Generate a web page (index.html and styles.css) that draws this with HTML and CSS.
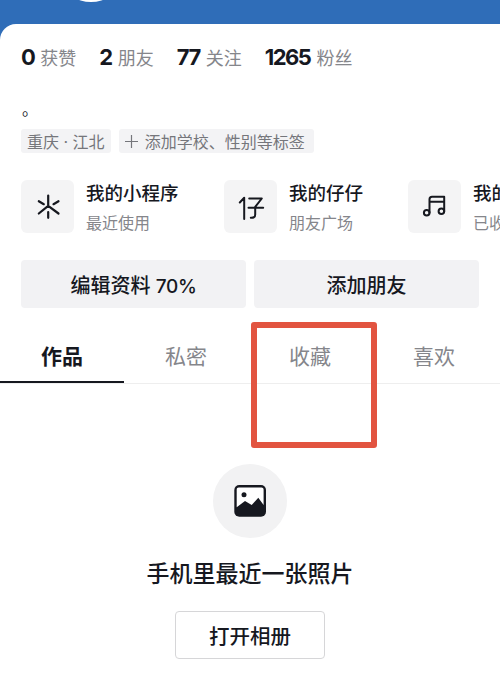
FILE: index.html
```html
<!DOCTYPE html>
<html lang="zh-CN">

<head>
  <meta charset="UTF-8" />
  <title>个人主页</title>
  <meta name="viewport" content="width=device-width, initial-scale=1.0" />
  <link rel="stylesheet" href="styles.css">
</head>

<body>
  <div class="cover">
    <div class="avatar"></div>
  </div>

  <div class="profile">
    <div class="stats">
      <div class="stat"><b>0</b><span>获赞</span></div>
      <div class="stat"><b>2</b><span>朋友</span></div>
      <div class="stat"><b>77</b><span>关注</span></div>
      <div class="stat"><b>1265</b><span>粉丝</span></div>
    </div>

    <p class="bio">。</p>

    <div class="tags">
      <span class="tag">重庆 · 江北</span>
      <span class="tag tag-add">
        <svg class="plus" width="13" height="13" viewBox="0 0 13 13" stroke="#75767b" stroke-width="1.2">
          <path d="M6.500 0v13M0 6.500h13" />
        </svg>
        添加学校、性别等标签
      </span>
    </div>

    <div class="shortcuts">
      <div class="shortcut">
        <div class="tile">
          <svg width="28" height="28" viewBox="0 0 28 28" fill="none" stroke="#16181f" stroke-width="2.200" stroke-linecap="round" stroke-linejoin="round">
            <path d="M14.200 2.500v10.300M4.800 20.500l9.400-7.700 10.300 7.700M14.200 19v5.800M4.800 8.200l5 3M24.500 8.200l-5 3" />
          </svg>
        </div>
        <div>
          <h4>我的小程序</h4>
          <p>最近使用</p>
        </div>
      </div>
      <div class="shortcut">
        <div class="tile">
          <svg width="28" height="28" viewBox="0 0 28 28" fill="none" stroke="#16181f" stroke-width="2" stroke-linecap="round" stroke-linejoin="round">
            <path d="M2.800 9.500l4.400-4.700V26M12.200 5.500h12.600l-6.600 8.300v7.700c0 2.500-1.500 3.500-4.400 3.300M11.500 14.800h14.700" />
          </svg>
        </div>
        <div>
          <h4>我的仔仔</h4>
          <p>朋友广场</p>
        </div>
      </div>
      <div class="shortcut">
        <div class="tile">
          <svg width="28" height="28" viewBox="0 0 28 28" fill="none" stroke="#16181f" stroke-width="2" stroke-linecap="round" stroke-linejoin="round">
            <path d="M8.500 19.800V6.300c0-1.500 1-2.500 2.500-2.500h12.200v14.400M8.500 8.800h14.700" />
            <circle cx="5.700" cy="19.800" r="2.800" />
            <circle cx="20.400" cy="18.200" r="2.800" />
          </svg>
        </div>
        <div>
          <h4>我的音乐</h4>
          <p>已收藏</p>
        </div>
      </div>
    </div>

    <div class="actions">
      <button class="btn">编辑资料 <span class="pct">70%</span></button>
      <button class="btn">添加朋友</button>
    </div>

    <div class="tabs">
      <a class="active">作品</a>
      <a>私密</a>
      <a>收藏</a>
      <a>喜欢</a>
    </div>

    <div class="empty">
      <div class="circle">
        <svg width="34" height="34" viewBox="0 0 34 34">
          <rect x="1.300" y="1" width="31.700" height="31.700" rx="5" fill="#16181f" />
          <path d="M3.700 23.300V5.500c0-1.200.8-2 2-2h22.800c1.200 0 2.100.8 2.100 2V21l-5.300-7.300-6.600 7.300-6.700-4z" fill="#fff" />
          <circle cx="11" cy="10.700" r="2.500" fill="#16181f" />
        </svg>
      </div>
      <h3>手机里最近一张照片</h3>
      <button class="open-btn">打开相册</button>
    </div>
  </div>

  <div class="highlight"></div>
</body>

</html>
```

FILE: styles.css
```css
body {
  margin: 0;
  height: 697px;
  overflow: hidden;
  position: relative;
  background: #2f6db8;
  font-family: "Inter", "Noto Sans CJK SC", sans-serif;
  color: #16181f;
}

.cover {
  height: 24px;
  position: relative;
  overflow: hidden;
}

.avatar {
  position: absolute;
  left: 64px;
  top: -38px;
  width: 54px;
  height: 40px;
  border-radius: 50%;
  background: #fff;
}

.profile {
  background: #fff;
  border-radius: 16px 0 0 0;
  height: 673px;
  overflow: hidden;
}

.stats {
  display: flex;
  gap: 23px;
  padding: 18px 0 0 21px;
  height: 29px;
  align-items: center;
}

.stat {
  display: flex;
  align-items: center;
  gap: 6px;
}

.stat b {
  font-size: 22px;
  font-weight: 700;
  letter-spacing: -1.500px;
}

.stat span {
  font-size: 18px;
  color: #85868b;
}

.bio {
  margin: 0;
  padding: 26px 0 0 22px;
  height: 32px;
  font-size: 16px;
  line-height: 24px;
}

.tags {
  display: flex;
  gap: 8px;
  padding-left: 21px;
}

.tag {
  display: flex;
  align-items: center;
  height: 24px;
  padding: 0 6px;
  border-radius: 3px;
  background: #f3f3f5;
  font-size: 16px;
  color: #75767b;
}

.tag-add {
  padding-right: 9px;
}

.plus {
  margin-right: 7px;
}

.shortcuts {
  display: flex;
  padding: 27px 0 0 21px;
  white-space: nowrap;
}

.shortcut {
  display: flex;
  gap: 12px;
  flex: none;
  height: 53px;
}

.shortcut:nth-child(1) {
  width: 203px;
}

.shortcut:nth-child(2) {
  width: 184px;
}

.tile {
  width: 53px;
  height: 53px;
  border-radius: 6px;
  background: #f4f4f5;
  display: flex;
  align-items: center;
  justify-content: center;
}

.shortcut h4 {
  margin: 0;
  font-size: 18.500px;
  font-weight: 500;
  line-height: 26px;
}

.shortcut p {
  margin: 5px 0 0;
  font-size: 16px;
  line-height: 24px;
  color: #85868b;
}

.actions {
  display: flex;
  gap: 8px;
  padding: 27px 21px 0;
}

.btn {
  flex: 1;
  height: 48px;
  border: none;
  border-radius: 4px;
  background: #f2f2f4;
  font-family: inherit;
  font-size: 20px;
  font-weight: 500;
  color: #16181f;
}

.pct {
  font-size: 19px;
  letter-spacing: -0.300px;
}

.tabs {
  display: flex;
  height: 75px;
  border-bottom: 1px solid #eeeeee;
}

.tabs a {
  width: 124px;
  height: 73px;
  line-height: 98px;
  text-align: center;
  font-size: 21px;
  color: #85868b;
}

.tabs a.active {
  color: #16181f;
  font-weight: 700;
  border-bottom: 2px solid #16181f;
}

.empty {
  display: flex;
  flex-direction: column;
  align-items: center;
  padding-top: 80px;
}

.circle {
  width: 74px;
  height: 74px;
  border-radius: 50%;
  background: #f2f2f3;
  display: flex;
  align-items: center;
  justify-content: center;
}

.empty h3 {
  margin: 20px 0 0;
  font-size: 23px;
  font-weight: 500;
  line-height: 32px;
}

.open-btn {
  margin-top: 21px;
  width: 150px;
  height: 48px;
  background: #fff;
  border: 1px solid #d6d6d8;
  border-radius: 4px;
  font-family: inherit;
  font-size: 20.500px;
  font-weight: 500;
  color: #16181f;
}

/* annotation drawn over the screenshot */
.highlight {
  position: absolute;
  left: 251px;
  top: 322px;
  width: 126px;
  height: 126px;
  box-sizing: border-box;
  border: 6px solid #e25440;
  border-radius: 3px;
}
```
